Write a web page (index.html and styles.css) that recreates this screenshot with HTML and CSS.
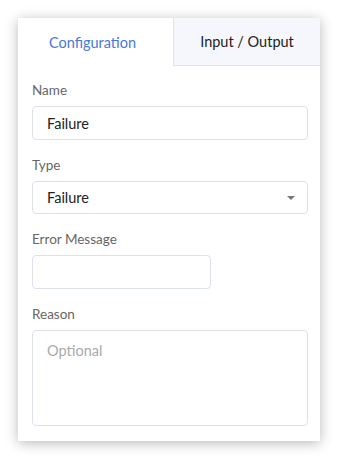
FILE: index.html
```html
<!DOCTYPE html>
<html>
  <head>
    <link rel="stylesheet" href="styles.css">
  </head>
  <body>
    <div class="card">
      <div class="tabs">
        <div class="tab active">Configuration</div>
        <div class="tab">Input / Output</div>
      </div>
      <div class="form">
        <div class="field">
          <div class="label">Name</div>
          <div class="input">Failure</div>
        </div>
        <div class="field">
          <div class="label">Type</div>
          <div class="input select">
            <span>Failure</span>
            <span class="caret"></span>
          </div>
        </div>
        <div class="field">
          <div class="label">Error Message</div>
          <div class="input short"></div>
        </div>
        <div class="field">
          <div class="label">Reason</div>
          <div class="input area">Optional</div>
        </div>
      </div>
    </div>
  </body>
</html>
```

FILE: styles.css
```css
body {
    margin: 0;
    padding: 18px;
    background: #fff;
    font-family: Lato, "Open Sans", sans-serif;
}
.card {
    width: 302px;
    height: 423px;
    background: #fff;
    box-shadow: 0 2px 12px rgba(0, 0, 0, 0.28);
    box-sizing: border-box;
}
.tabs {
    display: flex;
    height: 48px;
}
.tab {
    flex: 1;
    display: flex;
    align-items: center;
    justify-content: center;
    font-size: 14.5px;
    color: #222;
    background: #f5f7fc;
    border-left: 1px solid #dde3f0;
    border-bottom: 1px solid #dde3f0;
}
.tab.active {
    flex: 0 0 155px;
    box-sizing: border-box;
    padding-right: 6px;
    color: #4a78d6;
    background: #fff;
    border: none;
}
.form {
    padding: 16px 12px 0 14px;
}
.field {
    margin-bottom: 17px;
}
.label {
    font-size: 13.5px;
    color: #666;
    line-height: 16px;
    margin-bottom: 8px;
}
.input {
    height: 34px;
    box-sizing: border-box;
    border: 1px solid #dde1ec;
    border-radius: 4px;
    padding: 0 14px;
    display: flex;
    align-items: center;
    font-size: 14.5px;
    color: #222;
}
.select {
    justify-content: space-between;
    height: 33px;
}
.caret {
    width: 0;
    height: 0;
    border-left: 4px solid transparent;
    border-right: 4px solid transparent;
    border-top: 4px solid #777;
    margin-right: -2px;
}
.short {
    width: 179px;
}
.area {
    height: 96px;
    align-items: flex-start;
    padding-top: 11px;
    color: #aaa;
}
```
